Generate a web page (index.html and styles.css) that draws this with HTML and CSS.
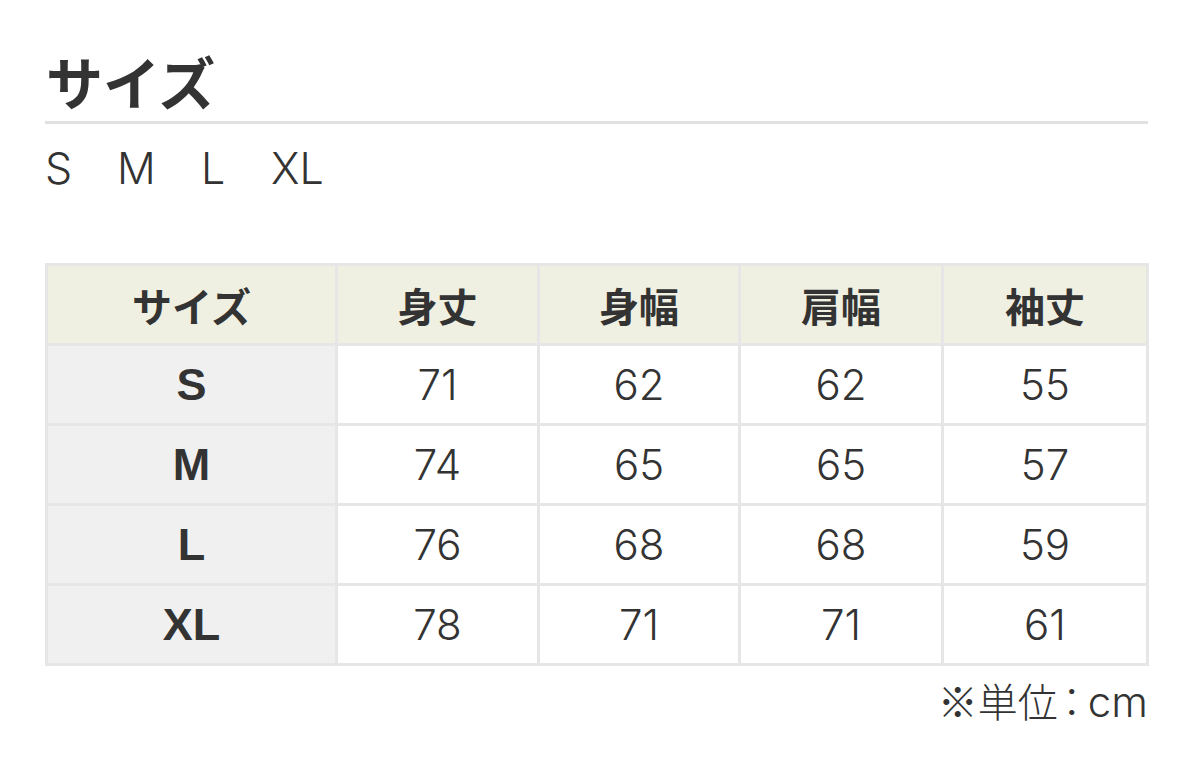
FILE: index.html
```html
<!DOCTYPE html>
<html lang="ja">
<head>
<meta charset="utf-8">
<link rel="stylesheet" href="styles.css">
</head>
<body>
<div class="page">
  <h2 class="title">サイズ</h2>
  <div class="sizes"><span>S</span><span>M</span><span>L</span><span>XL</span></div>
  <table class="chart">
    <colgroup>
      <col class="c0"><col class="c1"><col class="c2"><col class="c3"><col class="c4">
    </colgroup>
    <thead>
      <tr><th>サイズ</th><th>身丈</th><th>身幅</th><th>肩幅</th><th>袖丈</th></tr>
    </thead>
    <tbody>
      <tr><th>S</th><td>71</td><td>62</td><td>62</td><td>55</td></tr>
      <tr><th>M</th><td>74</td><td>65</td><td>65</td><td>57</td></tr>
      <tr><th>L</th><td>76</td><td>68</td><td>68</td><td>59</td></tr>
      <tr><th>XL</th><td>78</td><td>71</td><td>71</td><td>61</td></tr>
    </tbody>
  </table>
  <div class="unit"><span class="jp">※単位</span><span class="colon">：</span>cm</div>
</div>
</body>
</html>
```

FILE: styles.css
```css
html, body {
  margin: 0;
  padding: 0;
  background: #ffffff;
}
body {
  font-family: "Inter", "Noto Sans CJK JP", sans-serif;
  color: #333333;
}
.page {
  padding: 40px 42px 0 45px;
}
.title {
  margin: 0;
  font-family: "Noto Sans CJK JP", sans-serif;
  font-size: 57px;
  font-weight: 700;
  line-height: 80px;
  color: #333;
  padding-left: 1px;
  border-bottom: 3px solid #e1e1e1;
  padding-bottom: 1px;
}
.sizes {
  display: flex;
  font-size: 43px;
  line-height: 52px;
  margin-top: 18px;
  font-weight: 300;
  color: #333;
}
.sizes span:nth-child(1) { width: 72px; }
.sizes span:nth-child(2) { width: 84px; }
.sizes span:nth-child(3) { width: 70px; }
.chart {
  margin-top: 69px;
  width: 1101px;
  border-collapse: collapse;
  table-layout: fixed;
}
.c0 { width: 290px; }
.c1 { width: 202px; }
.c2 { width: 201px; }
.c3 { width: 203px; }
.c4 { width: 205px; }
.chart th, .chart td {
  border: 3px solid #e6e6e6;
  height: 77px;
  padding: 0;
  text-align: center;
  vertical-align: middle;
}
.chart thead th {
  background: #efefe2;
  font-family: "Noto Sans CJK JP", sans-serif;
  font-size: 40px;
  font-weight: 700;
  color: #333;
}
.chart tbody th {
  background: #f0f0f0;
  font-family: "Liberation Sans", "Noto Sans CJK JP", sans-serif;
  font-size: 45px;
  font-weight: 700;
  color: #333;
}
.chart td {
  background: #ffffff;
  font-size: 42px;
  font-weight: 300;
  color: #333;
}
.unit {
  text-align: right;
  font-size: 42px;
  line-height: 60px;
  margin-top: 4px;
  font-weight: 300;
  color: #333;
}
.unit .jp {
  font-family: "Noto Sans CJK JP", sans-serif;
  font-size: 40px;
  font-weight: 300;
}
.unit .colon {
  font-family: "Noto Sans CJK JP", sans-serif;
  font-size: 40px;
  font-weight: 300;
  font-feature-settings: "palt";
  padding: 0 6px 0 4px;
}
```
